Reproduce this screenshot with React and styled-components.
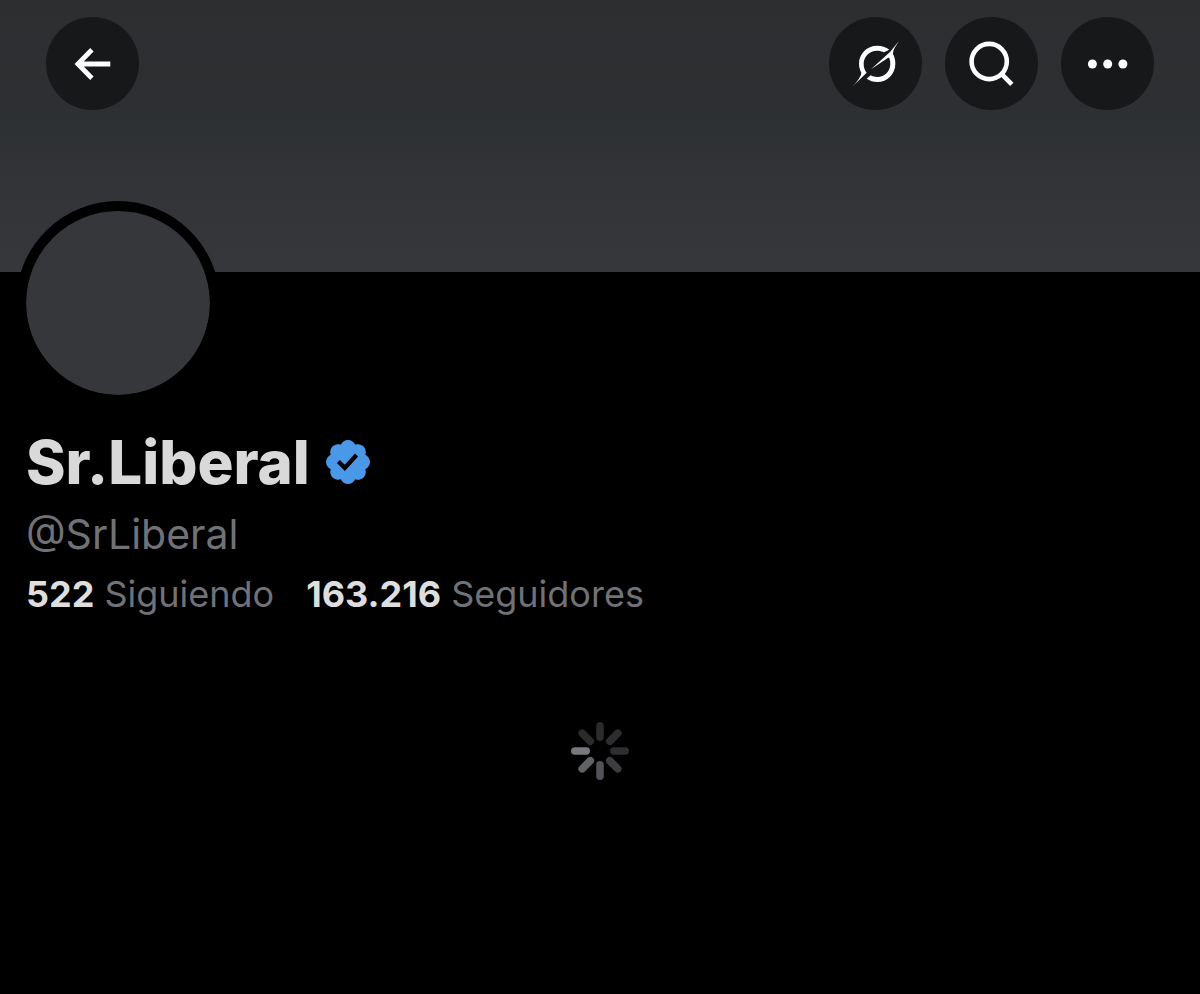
import React from "react";
import styled, { createGlobalStyle } from "styled-components";

const GlobalStyle = createGlobalStyle`
  *, *::before, *::after { box-sizing: border-box; }
  body {
    margin: 0;
    background: #000;
    color: #d9d9d9;
    font-family: Inter, "Liberation Sans", sans-serif;
  }
`;

const Page = styled.div`
  min-height: 100vh;
  background: #000;
`;

const Banner = styled.header`
  display: flex;
  align-items: flex-start;
  justify-content: space-between;
  height: 272px;
  padding: 17px 46px;
  background: linear-gradient(#2d2e30 0%, #2d3033 45%, #323336 62%, #36373b 100%);
`;

const Actions = styled.div`
  display: flex;
  gap: 23px;
`;

const RoundButton = styled.button`
  display: grid;
  place-items: center;
  width: 93px;
  height: 93px;
  padding: 0;
  border: 0;
  border-radius: 50%;
  background: #17181a;
  color: #fff;
  cursor: pointer;
`;

const Profile = styled.main`
  display: flex;
  flex-direction: column;
  padding: 0 26px;
`;

const Avatar = styled.div`
  width: 204px;
  height: 204px;
  margin: -71px 0 0 -10px;
  border: 10px solid #000;
  border-radius: 50%;
  background: #36373b;
  background-clip: padding-box;
`;

const NameRow = styled.div`
  display: flex;
  align-items: center;
  gap: 16px;
  margin-top: 21px;
`;

const Name = styled.h1`
  margin: 0;
  font-size: 60px;
  line-height: 72px;
  font-weight: 800;
`;

const Handle = styled.p`
  margin: 8px 0;
  color: #717277;
  font-size: 41px;
  line-height: 56px;
`;

const Stats = styled.nav`
  display: flex;
  gap: 32px;
`;

const Stat = styled.a`
  display: flex;
  gap: 10px;
  color: #717277;
  font-size: 36px;
  line-height: 48px;
  text-decoration: none;
`;

const Count = styled.strong`
  color: #dedede;
  font-weight: 700;
`;

const Loading = styled.div`
  display: flex;
  justify-content: center;
  padding: 103px 0;
`;

const spokes = [
  "#2b2b2d", "#2d2d2f", "#2e2e30", "#3c3d40",
  "#515256", "#626367", "#77787d", "#2b2b2d",
];

function BackIcon() {
  return (
    <svg width="48" height="48" viewBox="0 0 48 48" fill="none" stroke="currentColor" strokeWidth="4.8" aria-hidden="true">
      <path d="M22.9 9.8 8.9 24l14 14.2M8.9 24h32.4" />
    </svg>
  );
}

function GrokIcon() {
  return (
    <svg width="46" height="45" viewBox="9 9 138 135" fill="currentColor" aria-hidden="true">
      <path d="M118 35C108 27 95 23 81 23 51 23 27 47 27 77c0 10 3 19 7 27-1 12-13 27-25 40l41-40c-6-7-9-16-9-27 0-22 18-39 40-39 8 0 15 2 21 5Z" />
      <path d="M147 9c-9 14-18 26-18 39 5 9 7 19 7 29 0 31-24 55-54 55-12 0-23-4-32-10l12-10c6 3 12 5 20 5 22 0 39-18 39-40 0-6-1-11-3-16-2-3-5-1-8 1L63 94l57-52Z" />
    </svg>
  );
}

function SearchIcon() {
  return (
    <svg width="48" height="48" viewBox="0 0 48 48" fill="none" stroke="currentColor" strokeWidth="4.6" aria-hidden="true">
      <circle cx="21.2" cy="21.5" r="17.6" />
      <path d="M33.5 33.9 43.8 44.4" />
    </svg>
  );
}

function MoreIcon() {
  return (
    <svg width="48" height="48" viewBox="0 0 48 48" fill="currentColor" aria-hidden="true">
      <circle cx="8.4" cy="24" r="4.5" />
      <circle cx="23.7" cy="24" r="4.5" />
      <circle cx="38.9" cy="24" r="4.5" />
    </svg>
  );
}

function VerifiedIcon() {
  return (
    <svg width="44" height="44" viewBox="1.6 1.6 18.8 18.8" fill="#4a99e9" role="img" aria-label="Cuenta verificada">
      <path d="M20.396 11c-.018-.646-.215-1.275-.57-1.816-.354-.54-.852-.972-1.438-1.246.223-.607.27-1.264.14-1.897-.131-.634-.437-1.218-.882-1.687-.47-.445-1.053-.75-1.687-.882-.633-.13-1.29-.083-1.897.14-.273-.587-.704-1.086-1.245-1.44S11.647 1.62 11 1.604c-.646.017-1.273.213-1.813.568s-.969.854-1.24 1.44c-.608-.223-1.267-.272-1.902-.14-.635.13-1.22.436-1.69.882-.445.47-.749 1.055-.878 1.688-.13.633-.08 1.29.144 1.896-.587.274-1.087.705-1.443 1.245-.356.54-.555 1.17-.574 1.817.02.647.218 1.276.574 1.817.356.54.856.972 1.443 1.245-.224.606-.274 1.263-.144 1.896.13.634.433 1.218.877 1.688.47.443 1.054.747 1.687.878.633.132 1.29.084 1.897-.136.274.586.705 1.084 1.246 1.439.54.354 1.17.551 1.816.569.647-.016 1.276-.213 1.817-.567s.972-.854 1.245-1.44c.604.239 1.266.296 1.903.164.636-.132 1.22-.447 1.68-.907.46-.46.776-1.044.908-1.681s.075-1.299-.165-1.903c.586-.274 1.084-.705 1.439-1.246.354-.54.551-1.17.569-1.816zM9.662 14.85l-3.429-3.428 1.293-1.302 2.072 2.072 4.4-4.794 1.347 1.246z" />
    </svg>
  );
}

function Spinner() {
  return (
    <svg width="60" height="60" viewBox="-30 -30 60 60" strokeWidth="7.6" strokeLinecap="round" aria-hidden="true">
      {spokes.map((color, i) => (
        <path key={i} d="M0-13.8V-25.2" stroke={color} transform={`rotate(${i * 45})`} />
      ))}
    </svg>
  );
}

export default function App() {
  return (
    <Page>
      <GlobalStyle />
      <Banner>
        <RoundButton type="button" aria-label="Atrás"><BackIcon /></RoundButton>
        <Actions>
          <RoundButton type="button" aria-label="Grok"><GrokIcon /></RoundButton>
          <RoundButton type="button" aria-label="Buscar"><SearchIcon /></RoundButton>
          <RoundButton type="button" aria-label="Más opciones"><MoreIcon /></RoundButton>
        </Actions>
      </Banner>
      <Profile>
        <Avatar />
        <NameRow>
          <Name>Sr.Liberal</Name>
          <VerifiedIcon />
        </NameRow>
        <Handle>@SrLiberal</Handle>
        <Stats>
          <Stat href="#siguiendo"><Count>522</Count><span>Siguiendo</span></Stat>
          <Stat href="#seguidores"><Count>163.216</Count><span>Seguidores</span></Stat>
        </Stats>
        <Loading role="status" aria-label="Cargando"><Spinner /></Loading>
      </Profile>
    </Page>
  );
}
